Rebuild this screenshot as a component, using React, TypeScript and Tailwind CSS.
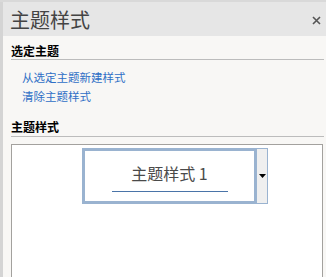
import React from 'react';

// Side panel: theme styles (主题样式)
const FONT = { fontFamily: '"Noto Sans CJK SC", "Noto Sans", sans-serif' };

export default function App() {
  return (
    <div
      className="w-[326px] h-[277px] flex overflow-hidden bg-[#f8f7f5] border-t-2 border-[#d9d9d9] leading-none"
      style={FONT}
    >
      {/* left splitter strip */}
      <div className="w-[3px] shrink-0 bg-[#d4d4d4]" />

      <div className="flex-1 flex flex-col min-w-0">
        {/* Header */}
        <div className="h-[34px] shrink-0 bg-[#e6e6e6] flex items-center justify-between pl-[7px] pr-[4px]">
          <div className="text-[20px] leading-[24px] text-[#444444] mt-[2px]">主题样式</div>
          <svg width="9" height="9" viewBox="0 0 9 9" className="mt-[3px] mr-[1px]">
            <path d="M1 1 L8 8 M8 1 L1 8" stroke="#555555" strokeWidth="1.6" />
          </svg>
        </div>

        {/* Body */}
        <div className="flex-1 flex flex-col pl-[8px] pr-[2px]">
          <div className="pt-[8px] pb-[2px] border-b border-[#bcbcbc] text-[12px] leading-[13px] font-bold text-black">
            选定主题
          </div>

          <div className="flex flex-col pl-[11px] pt-[10px] gap-[5px] text-[11.5px] leading-[14px] text-[#2f6fc6]">
            <div>从选定主题新建样式</div>
            <div>清除主题样式</div>
          </div>

          <div className="mt-[17px] pb-[3px] border-b border-[#bcbcbc] text-[12px] leading-[13px] font-bold text-black">
            主题样式
          </div>

          {/* Gallery */}
          <div className="mt-[7px] flex-1 bg-white border border-b-0 border-[#a3a19e] mr-[1px] flex pt-[3px]">
            <div className="flex h-[56px] ml-[70px]">
              <div className="w-[175px] h-full border-[3px] border-[#9ab3d0] flex flex-col items-center justify-center">
                <div className="text-[16px] leading-[20px] text-[#4a4a4a] mt-[2px]">主题样式 1</div>
                <div className="w-[116px] h-[1px] bg-[#4a74a8] mt-[8px]" />
              </div>
              <div className="w-[11px] h-full bg-[#efefef] border border-l-0 border-[#9ab3d0] flex items-center justify-center">
                <svg width="7" height="4" viewBox="0 0 7 4">
                  <path d="M0 0 H7 L3.5 4 Z" fill="#000000" />
                </svg>
              </div>
            </div>
          </div>
        </div>
      </div>
    </div>
  );
}
